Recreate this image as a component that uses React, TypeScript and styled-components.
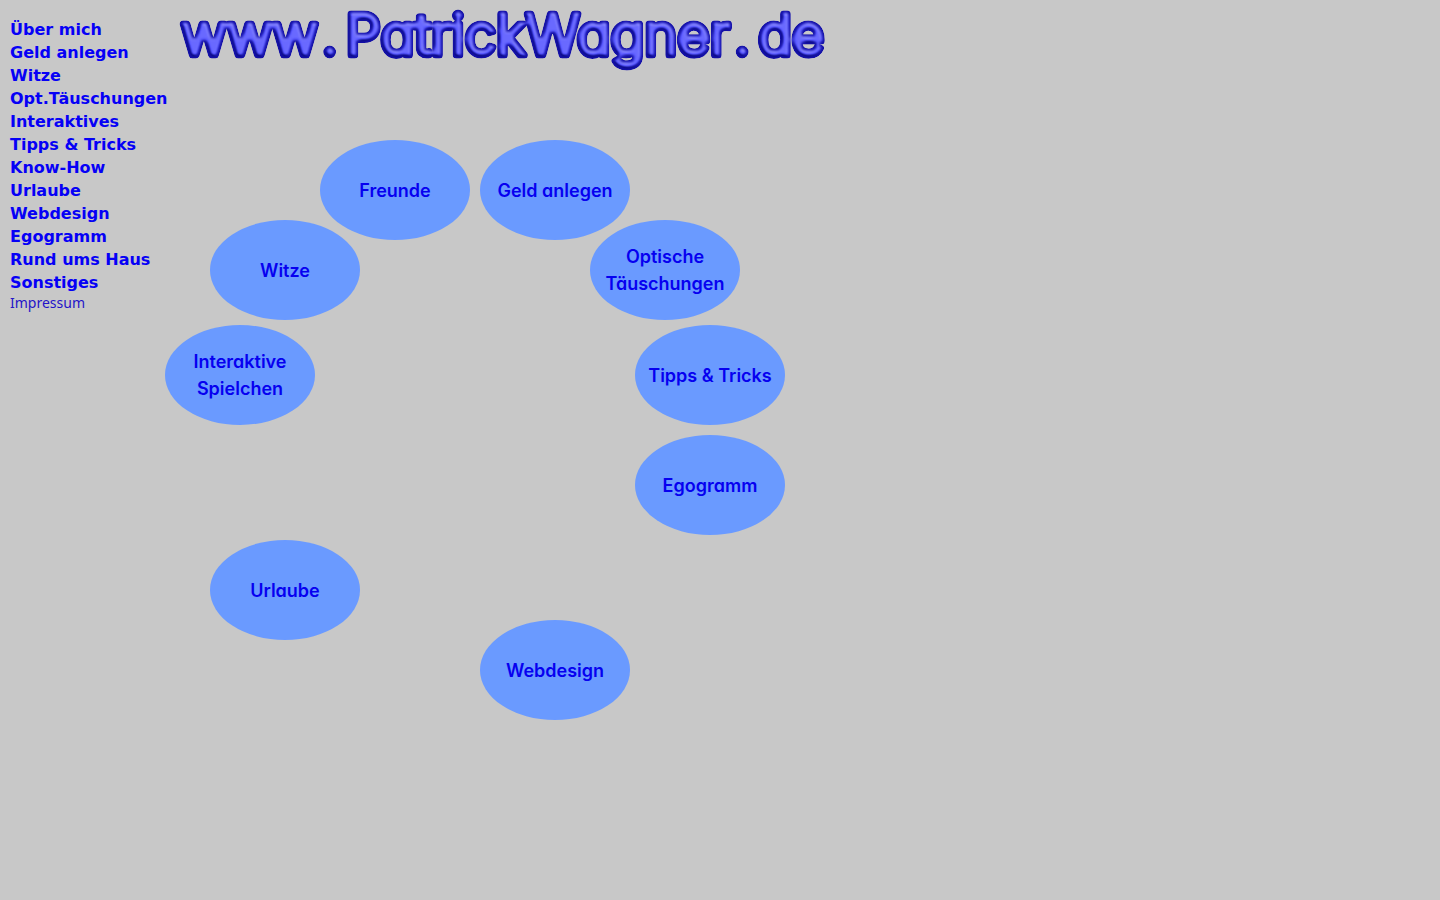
import React from "react";
import styled, { createGlobalStyle } from "styled-components";

const GlobalStyle = createGlobalStyle`
  body {
    margin: 0;
    background: #c8c8c8;
    font-family: "DejaVu Sans", Verdana, sans-serif;
  }
`;

const Page = styled.div`
  display: flex;
  align-items: flex-start;
`;

const Sidebar = styled.nav`
  box-sizing: border-box;
  flex: none;
  width: 165px;
  padding: 18px 0 0 10px;
`;

const MenuList = styled.ul`
  margin: 0;
  padding: 0;
  list-style: none;
`;

const MenuItem = styled.li<{ $small?: boolean }>`
  font-family: ${(p) => (p.$small ? '"Noto Sans", sans-serif' : "inherit")};
  font-size: ${(p) => (p.$small ? 14 : 16)}px;
  font-weight: ${(p) => (p.$small ? 400 : 700)};
  line-height: ${(p) => (p.$small ? 18 : 23)}px;
  white-space: nowrap;
`;

const MenuLink = styled.a<{ $small?: boolean }>`
  color: ${(p) => (p.$small ? "#2414c8" : "#0600f6")};
  text-decoration: none;
`;

const Main = styled.main`
  flex: 1;
  min-width: 0;
`;

const Title = styled.h1`
  margin: 0;
  height: 140px;
`;

const Logo = styled.svg`
  display: block;
  overflow: visible;
`;

const LogoText = styled.text`
  fill: #4a46f0;
  stroke: #4a46f0;
  stroke-width: 7px;
  stroke-linejoin: round;
  stroke-linecap: round;
  font-family: "Comic Sans MS", Inter, sans-serif;
  font-feature-settings: "cv11";
  font-size: 56px;
  font-weight: 300;
`;

const Ring = styled.div`
  position: relative;
  height: 580px;
`;

const Bubble = styled.a<{ $x: number; $y: number }>`
  position: absolute;
  left: ${(p) => p.$x}px;
  top: ${(p) => p.$y}px;
  display: flex;
  align-items: center;
  justify-content: center;
  width: 150px;
  height: 100px;
  border-radius: 50%;
  background: #6a9aff;
  color: #0600f0;
  font-family: "Comic Sans MS", Inter, sans-serif;
  font-feature-settings: "cv11";
  font-size: 18px;
  font-weight: 600;
  line-height: 27px;
  text-align: center;
  text-decoration: none;
  white-space: pre-line;
`;

const menu = [
  "Über mich",
  "Geld anlegen",
  "Witze",
  "Opt.Täuschungen",
  "Interaktives",
  "Tipps & Tricks",
  "Know-How",
  "Urlaube",
  "Webdesign",
  "Egogramm",
  "Rund ums Haus",
  "Sonstiges",
];

const bubbles = [
  { label: "Freunde", x: 155, y: 0 },
  { label: "Geld anlegen", x: 315, y: 0 },
  { label: "Optische\nTäuschungen", x: 425, y: 80 },
  { label: "Tipps & Tricks", x: 470, y: 185 },
  { label: "Egogramm", x: 470, y: 295 },
  { label: "Webdesign", x: 315, y: 480 },
  { label: "Urlaube", x: 45, y: 400 },
  { label: "Interaktive\nSpielchen", x: 0, y: 185 },
  { label: "Witze", x: 45, y: 80 },
];

export default function App() {
  return (
    <Page>
      <GlobalStyle />
      <Sidebar>
        <MenuList>
          {menu.map((label) => (
            <MenuItem key={label}>
              <MenuLink href="#">{label}</MenuLink>
            </MenuItem>
          ))}
          <MenuItem $small>
            <MenuLink $small href="#">Impressum</MenuLink>
          </MenuItem>
        </MenuList>
      </Sidebar>
      <Main>
        <Title>
          <Logo width="680" height="80">
            <filter id="bevel" x="0" y="0" width="680" height="80" filterUnits="userSpaceOnUse" colorInterpolationFilters="sRGB">
              <feGaussianBlur in="SourceAlpha" stdDeviation="2" result="height" />
              <feDiffuseLighting in="height" surfaceScale="7" diffuseConstant="1" lightingColor="#7c7cc8" result="light">
                <feDistantLight azimuth="300" elevation="50" />
              </feDiffuseLighting>
              <feFlood floodColor="#0a0a80" result="base" />
              <feComposite in="light" in2="base" operator="arithmetic" k2="1" k3="1" result="lit" />
              <feMorphology in="SourceAlpha" operator="erode" radius="2" result="core" />
              <feGaussianBlur in="core" stdDeviation="1" result="softCore" />
              <feComposite in="lit" in2="softCore" operator="in" result="face" />
              <feFlood floodColor="#1410a8" />
              <feComposite in2="SourceAlpha" operator="in" result="rim" />
              <feMerge result="body">
                <feMergeNode in="rim" />
                <feMergeNode in="face" />
              </feMerge>
              <feComposite in="body" in2="SourceAlpha" operator="in" />
            </filter>
            <g filter="url(#bevel)">
              <LogoText x="16" y="55">
                www<tspan dx="8">.</tspan><tspan dx="8">PatrickWagner</tspan><tspan dx="8">.</tspan><tspan dx="8">de</tspan>
              </LogoText>
            </g>
          </Logo>
        </Title>
        <Ring>
          {bubbles.map((b) => (
            <Bubble key={b.label} href="#" $x={b.x} $y={b.y}>
              {b.label}
            </Bubble>
          ))}
        </Ring>
      </Main>
    </Page>
  );
}
